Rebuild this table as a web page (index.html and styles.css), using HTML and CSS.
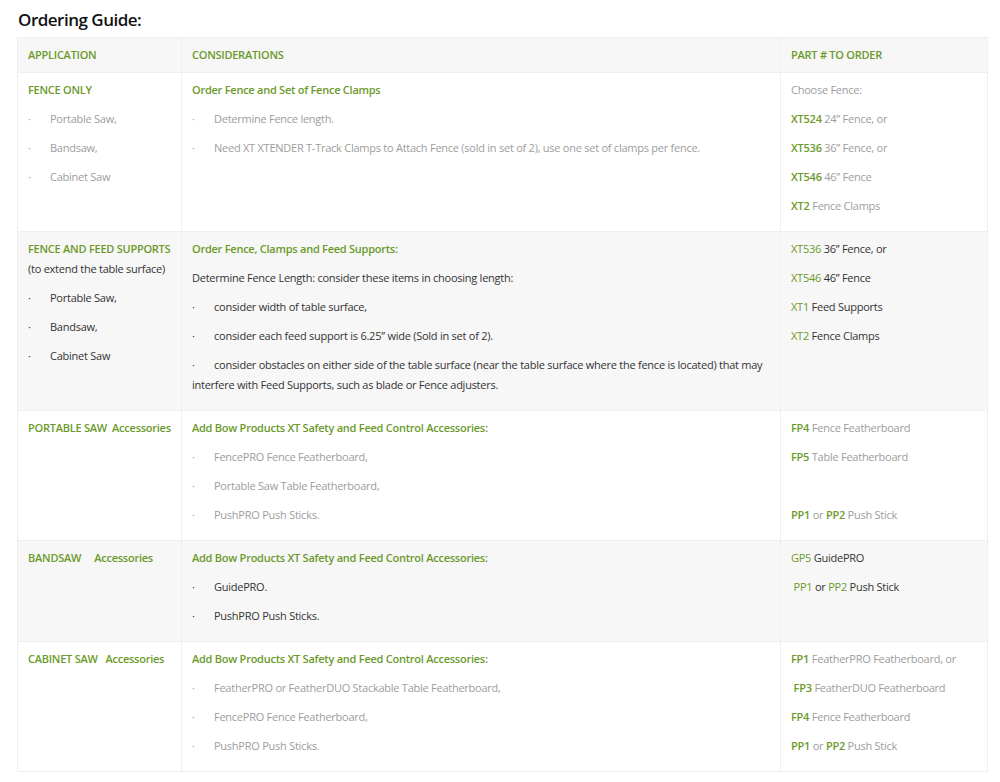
FILE: index.html
```html
<!DOCTYPE html>
<html>
<head>
<meta charset="utf-8">
<link rel="stylesheet" href="styles.css">
</head>
<body>
<div class="page">
<h2 class="title">Ordering Guide:</h2>
<table class="guide">
<colgroup><col class="c1"><col class="c2"><col class="c3"></colgroup>
<thead>
<tr><th>APPLICATION</th><th>CONSIDERATIONS</th><th>PART # TO ORDER</th></tr>
</thead>
<tbody>
<tr class="light">
<td>
<p class="g">FENCE ONLY</p>
<p><span class="b">·</span>Portable Saw,</p>
<p><span class="b">·</span>Bandsaw,</p>
<p><span class="b">·</span>Cabinet Saw</p>
</td>
<td>
<p class="g">Order Fence and Set of Fence Clamps</p>
<p><span class="b">·</span>Determine Fence length.</p>
<p><span class="b">·</span>Need XT XTENDER T-Track Clamps to Attach Fence (sold in set of 2), use one set of clamps per fence.</p>
</td>
<td>
<p>Choose Fence:</p>
<p><strong>XT524</strong> 24” Fence, or</p>
<p><strong>XT536</strong> 36” Fence, or</p>
<p><strong>XT546</strong> 46” Fence</p>
<p><strong>XT2</strong> Fence Clamps</p>
</td>
</tr>
<tr class="dark">
<td>
<p><span class="g">FENCE AND FEED SUPPORTS</span><br>(to extend the table surface)</p>
<p><span class="b">·</span>Portable Saw,</p>
<p><span class="b">·</span>Bandsaw,</p>
<p><span class="b">·</span>Cabinet Saw</p>
</td>
<td>
<p class="g">Order Fence, Clamps and Feed Supports:</p>
<p>Determine Fence Length: consider these items in choosing length:</p>
<p><span class="b">·</span>consider width of table surface,</p>
<p><span class="b">·</span>consider each feed support is 6.25” wide (Sold in set of 2).</p>
<p><span class="b">·</span>consider obstacles on either side of the table surface (near the table surface where the fence is located) that may interfere with Feed Supports, such as blade or Fence adjusters.</p>
</td>
<td>
<p><span class="gn">XT536</span> 36” Fence, or</p>
<p><span class="gn">XT546</span> 46” Fence</p>
<p><span class="gn">XT1</span> Feed Supports</p>
<p><span class="gn">XT2</span> Fence Clamps</p>
</td>
</tr>
<tr class="light">
<td>
<p class="g">PORTABLE SAW&nbsp; Accessories</p>
</td>
<td>
<p class="g">Add Bow Products XT Safety and Feed Control Accessories:</p>
<p><span class="b">·</span>FencePRO Fence Featherboard,</p>
<p><span class="b">·</span>Portable Saw Table Featherboard,</p>
<p><span class="b">·</span>PushPRO Push Sticks.</p>
</td>
<td>
<p><strong>FP4</strong> Fence Featherboard</p>
<p><strong>FP5</strong> Table Featherboard</p>
<p>&nbsp;</p>
<p><strong>PP1</strong> or <strong>PP2</strong> Push Stick</p>
</td>
</tr>
<tr class="dark">
<td>
<p class="g">BANDSAW &nbsp; &nbsp; Accessories</p>
</td>
<td>
<p class="g">Add Bow Products XT Safety and Feed Control Accessories:</p>
<p><span class="b">·</span>GuidePRO.</p>
<p><span class="b">·</span>PushPRO Push Sticks.</p>
</td>
<td>
<p><span class="gn">GP5</span> GuidePRO</p>
<p>&nbsp;<span class="gn">PP1</span> or <span class="gn">PP2</span> Push Stick</p>
</td>
</tr>
<tr class="light">
<td>
<p class="g">CABINET SAW &nbsp; Accessories</p>
</td>
<td>
<p class="g">Add Bow Products XT Safety and Feed Control Accessories:</p>
<p><span class="b">·</span>FeatherPRO or FeatherDUO Stackable Table Featherboard,</p>
<p><span class="b">·</span>FencePRO Fence Featherboard,</p>
<p><span class="b">·</span>PushPRO Push Sticks.</p>
</td>
<td>
<p><strong>FP1</strong> FeatherPRO Featherboard, or</p>
<p>&nbsp;<strong>FP3</strong> FeatherDUO Featherboard</p>
<p><strong>FP4</strong> Fence Featherboard</p>
<p><strong>PP1</strong> or <strong>PP2</strong> Push Stick</p>
</td>
</tr>
</tbody>
</table>
</div>
</body>
</html>
```

FILE: styles.css
```css
html, body {
  margin: 0;
  padding: 0;
  background: #fff;
}
.page {
  padding: 8px 13px 0 17px;
  font-family: "Open Sans", "Liberation Sans", sans-serif;
}
.title {
  margin: 0 0 5px 1px;
  font-size: 17px;
  line-height: 24px;
  font-weight: 600;
  letter-spacing: -0.5px;
  color: #111;
}
.guide {
  width: 970px;
  border-collapse: collapse;
  table-layout: fixed;
  font-size: 11px;
  line-height: 20px;
  letter-spacing: -0.25px;
}
.c1 { width: 164px; }
.c2 { width: 599px; }
.c3 { width: 207px; }
.guide th,
.guide td {
  border: 1px solid #efefef;
  text-align: left;
  vertical-align: top;
}
.guide th {
  background: #f7f7f7;
  color: #6b9a2b;
  font-weight: 600;
  padding: 7px 10px 7px;
}
.guide td {
  padding: 7px 10px 6px;
}
.guide p {
  margin: 0 0 9px;
}
.light td {
  background: #fff;
  color: #9d9d9d;
}
.dark td {
  background: #f7f7f7;
  color: #333;
}
.g {
  color: #6b9a2b;
  font-weight: 600;
}
.gn {
  color: #6b9a2b;
}
.guide strong {
  color: #6b9a2b;
  font-weight: 600;
}
.b {
  display: inline-block;
  width: 22px;
}
```
